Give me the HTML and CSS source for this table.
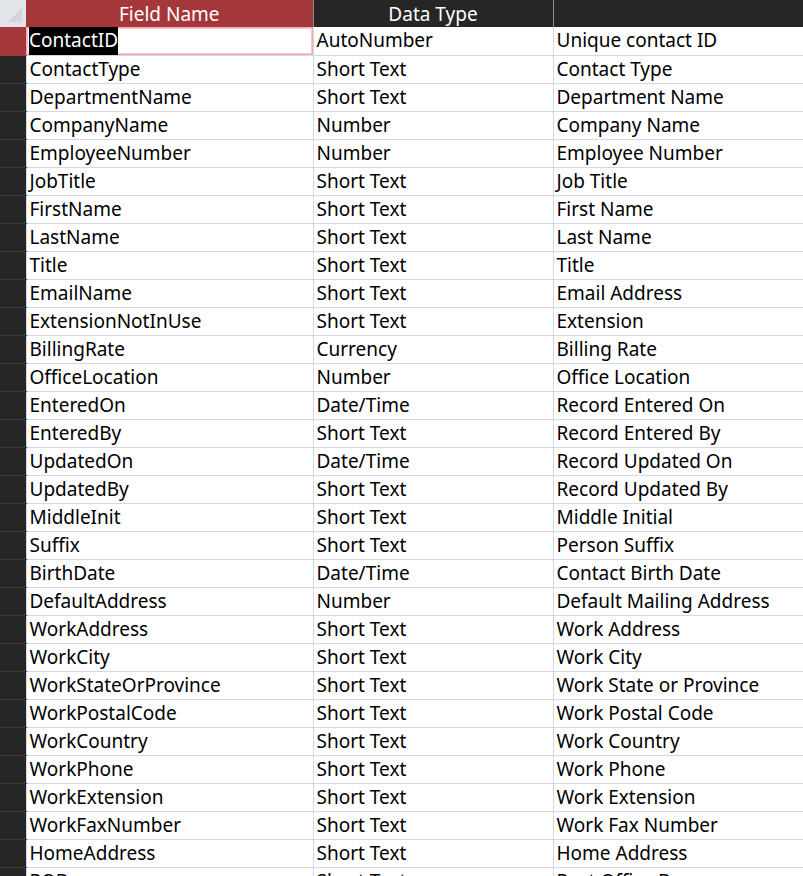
FILE: index.html
```html
<!DOCTYPE html>
<html lang="en">

<head>
  <meta charset="UTF-8">
  <title>Contacts : Table</title>
  <link rel="stylesheet" href="styles.css">
</head>

<body>
  <table class="design">
    <colgroup>
      <col class="col-sel">
      <col class="col-name">
      <col class="col-type">
      <col class="col-desc">
    </colgroup>
    <thead>
      <tr>
        <th class="corner">
          <svg width="26" height="27" viewBox="0 0 26 27">
            <path d="M9 22 L22 9 L22 22 Z" fill="#d3d7dd"/>
            <path d="M9 22 L22 9" stroke="#c5cad1" stroke-width="1"/>
          </svg>
        </th>
        <th class="head-active">Field Name</th>
        <th>Data Type</th>
        <th></th>
      </tr>
    </thead>
    <tbody>
      <tr class="current">
        <td class="sel"></td>
        <td class="focus"><span class="hilite">ContactID</span></td>
        <td>AutoNumber</td>
        <td>Unique contact ID</td>
      </tr>
      <tr><td class="sel"></td><td>ContactType</td><td>Short Text</td><td>Contact Type</td></tr>
      <tr><td class="sel"></td><td>DepartmentName</td><td>Short Text</td><td>Department Name</td></tr>
      <tr><td class="sel"></td><td>CompanyName</td><td>Number</td><td>Company Name</td></tr>
      <tr><td class="sel"></td><td>EmployeeNumber</td><td>Number</td><td>Employee Number</td></tr>
      <tr><td class="sel"></td><td>JobTitle</td><td>Short Text</td><td>Job Title</td></tr>
      <tr><td class="sel"></td><td>FirstName</td><td>Short Text</td><td>First Name</td></tr>
      <tr><td class="sel"></td><td>LastName</td><td>Short Text</td><td>Last Name</td></tr>
      <tr><td class="sel"></td><td>Title</td><td>Short Text</td><td>Title</td></tr>
      <tr><td class="sel"></td><td>EmailName</td><td>Short Text</td><td>Email Address</td></tr>
      <tr><td class="sel"></td><td>ExtensionNotInUse</td><td>Short Text</td><td>Extension</td></tr>
      <tr><td class="sel"></td><td>BillingRate</td><td>Currency</td><td>Billing Rate</td></tr>
      <tr><td class="sel"></td><td>OfficeLocation</td><td>Number</td><td>Office Location</td></tr>
      <tr><td class="sel"></td><td>EnteredOn</td><td>Date/Time</td><td>Record Entered On</td></tr>
      <tr><td class="sel"></td><td>EnteredBy</td><td>Short Text</td><td>Record Entered By</td></tr>
      <tr><td class="sel"></td><td>UpdatedOn</td><td>Date/Time</td><td>Record Updated On</td></tr>
      <tr><td class="sel"></td><td>UpdatedBy</td><td>Short Text</td><td>Record Updated By</td></tr>
      <tr><td class="sel"></td><td>MiddleInit</td><td>Short Text</td><td>Middle Initial</td></tr>
      <tr><td class="sel"></td><td>Suffix</td><td>Short Text</td><td>Person Suffix</td></tr>
      <tr><td class="sel"></td><td>BirthDate</td><td>Date/Time</td><td>Contact Birth Date</td></tr>
      <tr><td class="sel"></td><td>DefaultAddress</td><td>Number</td><td>Default Mailing Address</td></tr>
      <tr><td class="sel"></td><td>WorkAddress</td><td>Short Text</td><td>Work Address</td></tr>
      <tr><td class="sel"></td><td>WorkCity</td><td>Short Text</td><td>Work City</td></tr>
      <tr><td class="sel"></td><td>WorkStateOrProvince</td><td>Short Text</td><td>Work State or Province</td></tr>
      <tr><td class="sel"></td><td>WorkPostalCode</td><td>Short Text</td><td>Work Postal Code</td></tr>
      <tr><td class="sel"></td><td>WorkCountry</td><td>Short Text</td><td>Work Country</td></tr>
      <tr><td class="sel"></td><td>WorkPhone</td><td>Short Text</td><td>Work Phone</td></tr>
      <tr><td class="sel"></td><td>WorkExtension</td><td>Short Text</td><td>Work Extension</td></tr>
      <tr><td class="sel"></td><td>WorkFaxNumber</td><td>Short Text</td><td>Work Fax Number</td></tr>
      <tr><td class="sel"></td><td>HomeAddress</td><td>Short Text</td><td>Home Address</td></tr>
      <tr><td class="sel"></td><td>POBox</td><td>Short Text</td><td>Post Office Box</td></tr>
    </tbody>
  </table>
</body>

</html>
```

FILE: styles.css
```css
* {
  margin: 0;
  padding: 0;
  box-sizing: border-box;
}

body {
  background-color: #fff;
  font-family: "Noto Sans", "Open Sans", sans-serif;
  font-size: 19px;
  color: #000;
  overflow: hidden;
}

.design {
  width: 803px;
  table-layout: fixed;
  border-collapse: collapse;
}

.design .col-sel {
  width: 26px;
}

.design .col-name {
  width: 287px;
}

.design .col-type {
  width: 240px;
}

.design .col-desc {
  width: 250px;
}

/* header */
.design thead th {
  height: 27px;
  padding: 0;
  background-color: #262626;
  color: #fff;
  font-weight: normal;
  text-align: center;
  line-height: 26px;
  border-left: 1px solid #8c8c8c;
  border-bottom: 0;
}

.design thead th.corner {
  background-color: #e1e4e8;
  border-left: 0;
  line-height: 0;
  vertical-align: top;
}

.design thead th.head-active {
  background-color: #a4373a;
  border-left: 0;
}

/* body rows */
.design tbody td {
  height: 28px;
  padding: 0 3px;
  line-height: 27px;
  white-space: nowrap;
  overflow: hidden;
  border-left: 1px solid #d3d8e4;
  border-bottom: 1px solid #d3d8e4;
}

.design tbody td.sel {
  background-color: #262626;
  border-left: 0;
  border-bottom: 1px solid #3a3a3a;
}

.design tbody tr.current td.sel {
  background-color: #a4373a;
  border-bottom-color: #a4373a;
}

.design tbody td.focus {
  border-left: 0;
  box-shadow: inset 0 0 0 1px #f2a9ae, inset 0 0 0 2px #f6c9cc;
}

.design .hilite {
  background-color: #000;
  color: #fff;
  padding: 1px 0 2px;
}
```
